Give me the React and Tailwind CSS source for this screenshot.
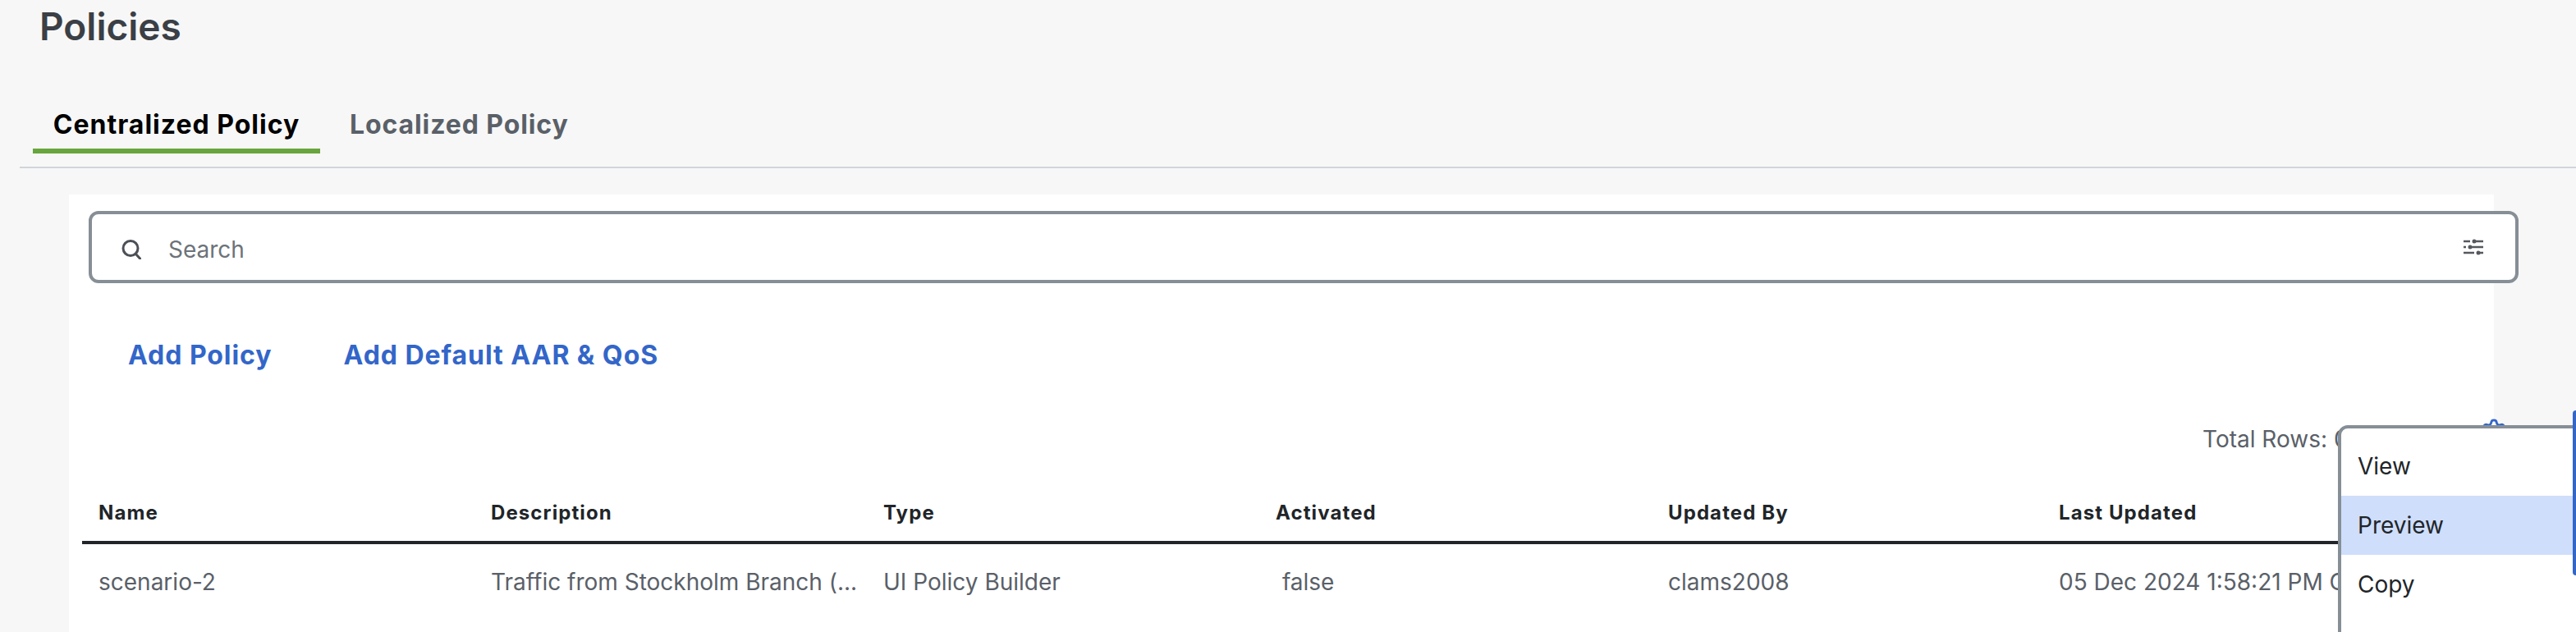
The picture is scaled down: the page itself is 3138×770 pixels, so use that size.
import React from "react";
import { Settings } from "lucide-react";

const columns = ["Name", "Description", "Type", "Activated", "Updated By", "Last Updated"];

const row = [
    "scenario-2",
    "Traffic from Stockholm Branch (...",
    "UI Policy Builder",
    "\u00a0false",
    "clams2008",
    "05 Dec 2024 1:58:21 PM GMT",
];

function SearchGlyph() {
    return (
        <svg className="mt-[6px]" width="24" height="24" viewBox="0 0 24 24" fill="none" stroke="#4b5056" strokeWidth="3" strokeLinecap="round">
            <circle cx="11" cy="10.5" r="9" />
            <path d="M17.5 17.5 L22.5 23" />
        </svg>
    );
}

function FilterGlyph() {
    return (
        <svg width="24" height="20" viewBox="0 0 24 20" fill="#55595e" stroke="#55595e" strokeWidth="2.5">
            <path d="M0 3 H8 M11 3 H24 M0 10 H3 M7 10 H24 M0 17 H13 M17 17 H24" fill="none" />
            <circle cx="13" cy="3" r="2.5" stroke="none" />
            <circle cx="8" cy="10" r="2.5" stroke="none" />
            <circle cx="18" cy="17" r="2.5" stroke="none" />
        </svg>
    );
}

export default function App() {
    return (
        <div className="relative h-[770px] w-[3138px] overflow-hidden bg-[#f7f7f7] font-['Inter',sans-serif]">
            <h1 className="pl-[48px] pt-[2px] h-[110px] text-[46px] leading-[60px] font-semibold text-[#3b3f46]">Policies</h1>

            <div className="ml-[24px] flex h-[95px] items-start border-b-2 border-[#d0d5da] pl-[16px]">
                <div className="flex h-[77px] w-[350px] items-start justify-center border-b-[6px] border-[#67a63c] pt-[20px] text-[32px] leading-[44px] font-bold tracking-[1px] text-black">
                    Centralized Policy
                </div>
                <div className="ml-[36px] pt-[20px] text-[32px] leading-[44px] font-bold tracking-[0.9px] text-[#5a6068]">Localized Policy</div>
            </div>

            <div className="ml-[84px] mt-[32px] h-[533px] w-[2954px] bg-white pt-[20px]">
                <div className="ml-[24px] flex h-[88px] w-[2960px] items-center rounded-[12px] border-4 border-[#868e96] bg-white pl-[36px] pr-[39px]">
                    <SearchGlyph />
                    <span className="ml-[33px] mt-[6px] text-[28px] text-[#6c737a]">Search</span>
                    <div className="ml-auto">
                        <FilterGlyph />
                    </div>
                </div>

                <div className="mt-[66px] flex gap-[87px] pl-[72px] text-[32px] leading-[44px] font-bold tracking-[0.95px] text-[#3366c9]">
                    <span>Add Policy</span>
                    <span>Add Default AAR &amp; QoS</span>
                </div>

                <div className="mt-[58px] flex h-[44px] items-center justify-end">
                    <span className="absolute left-[2683px] text-[28px] text-[#5a6068]">Total Rows: 0</span>
                    <Settings className="absolute left-[3021px] top-[509px] text-[#3366c9]" size={34} strokeWidth={2} />
                </div>

                <div className="mx-[16px] mt-[38px]">
                    <div className="grid h-[68px] grid-cols-[478px_478px_478px_478px_476px_1fr] items-center border-b-4 border-[#212529] pl-[4px] pb-[4px] text-[24px] font-bold tracking-[1.1px] text-[#212529]">
                        {columns.map((col) => (
                            <div key={col} className="pl-[16px]">{col}</div>
                        ))}
                    </div>
                    <div className="grid h-[92px] grid-cols-[478px_478px_478px_478px_476px_1fr] items-center pl-[4px] text-[28px] text-[#5a6068]">
                        {row.map((cell) => (
                            <div key={cell} className="whitespace-nowrap pl-[16px]">{cell}</div>
                        ))}
                    </div>
                </div>
            </div>

            <div className="absolute left-[2848px] top-[518px] h-[300px] w-[340px] rounded-tl-[12px] border-4 border-[#868e96] bg-white py-[10px] text-[28px] text-[#212529]">
                <div className="flex h-[72px] items-center pl-[20px]">View</div>
                <div className="flex h-[72px] items-center bg-[#cfdefb] pl-[20px]">Preview</div>
                <div className="flex h-[72px] items-center pl-[20px]">Copy</div>
            </div>
            <div className="absolute left-[3134px] top-[500px] h-[201px] w-[4px] rounded-l-[4px] bg-[#3366c9]" />
        </div>
    );
}
